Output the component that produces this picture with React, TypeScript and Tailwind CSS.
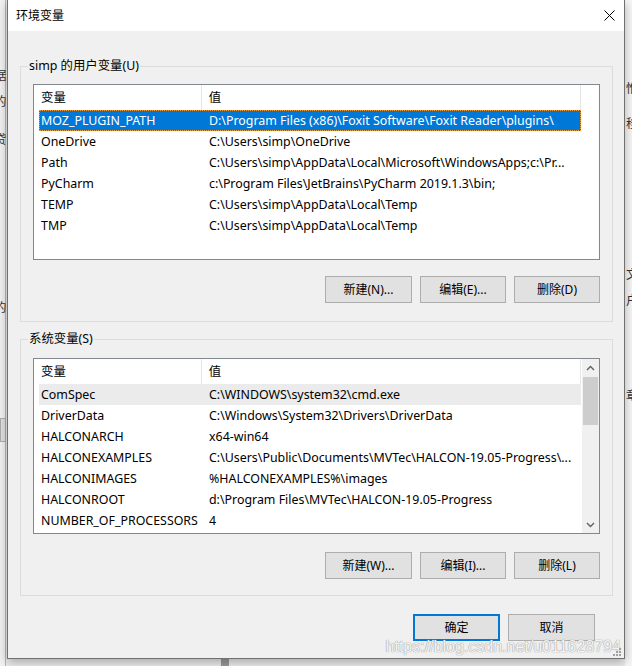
import clsx from 'clsx';

const userVars: [string, string][] = [
    ['MOZ_PLUGIN_PATH', 'D:\\Program Files (x86)\\Foxit Software\\Foxit Reader\\plugins\\'],
    ['OneDrive', 'C:\\Users\\simp\\OneDrive'],
    ['Path', 'C:\\Users\\simp\\AppData\\Local\\Microsoft\\WindowsApps;c:\\Pr...'],
    ['PyCharm', 'c:\\Program Files\\JetBrains\\PyCharm 2019.1.3\\bin;'],
    ['TEMP', 'C:\\Users\\simp\\AppData\\Local\\Temp'],
    ['TMP', 'C:\\Users\\simp\\AppData\\Local\\Temp'],
];

const sysVars: [string, string][] = [
    ['ComSpec', 'C:\\WINDOWS\\system32\\cmd.exe'],
    ['DriverData', 'C:\\Windows\\System32\\Drivers\\DriverData'],
    ['HALCONARCH', 'x64-win64'],
    ['HALCONEXAMPLES', 'C:\\Users\\Public\\Documents\\MVTec\\HALCON-19.05-Progress\\...'],
    ['HALCONIMAGES', '%HALCONEXAMPLES%\\images'],
    ['HALCONROOT', 'd:\\Program Files\\MVTec\\HALCON-19.05-Progress'],
    ['NUMBER_OF_PROCESSORS', '4'],
];

function Row({ name, value, state }: { name: string; value: string; state?: 'selected' | 'inactive' }) {
    return (
        <div
            className={clsx(
                'ml-[5px] flex h-[21px] w-[542px] shrink-0 items-center whitespace-nowrap pt-[1px]',
                state === 'selected' && 'bg-[#0078d7] text-white outline-1 -outline-offset-1 outline-dotted outline-[#f0a040]',
                state === 'inactive' && 'bg-[#ebebeb]'
            )}
        >
            <div className="w-[162px] shrink-0 overflow-hidden pl-[2px]">{name}</div>
            <div className="flex-1 overflow-hidden pl-[8px]">{value}</div>
        </div>
    );
}

function Chevron({ up }: { up?: boolean }) {
    return (
        <svg width="9" height="6" viewBox="0 0 9 6" className={clsx(!up && 'rotate-180')}>
            <path d="M1 5 L4.5 1.5 L8 5" fill="none" stroke="#606060" strokeWidth="1.4" />
        </svg>
    );
}

function VarList({ rows, selected, inactive, scroll }: { rows: [string, string][]; selected?: number; inactive?: number; scroll?: boolean }) {
    return (
        <div className="flex h-[176px] w-[567px] border border-[#828790] bg-white">
            <div className="flex w-[547px] flex-col overflow-hidden">
                <div className="flex h-[25px] shrink-0 items-center">
                    <div className="flex h-full w-[168px] items-center border-r border-[#e5e5e5] pl-[7px] pt-[1px]">变量</div>
                    <div className="flex h-full w-[380px] items-center border-r border-[#e5e5e5] pl-[7px] pt-[1px]">值</div>
                </div>
                {rows.map(([n, v], i) => (
                    <Row key={n} name={n} value={v} state={i === selected ? 'selected' : i === inactive ? 'inactive' : undefined} />
                ))}
            </div>
            {scroll && (
                <div className="ml-auto flex w-[17px] flex-col bg-[#f0f0f0]">
                    <div className="flex h-[17px] items-center justify-center">
                        <Chevron up />
                    </div>
                    <div className="mx-[1px] mt-[1px] h-[48px] bg-[#cdcdcd]" />
                    <div className="mt-auto flex h-[17px] items-center justify-center">
                        <Chevron />
                    </div>
                </div>
            )}
        </div>
    );
}

function Btn({ children, primary, className }: { children: React.ReactNode; primary?: boolean; className?: string }) {
    return (
        <div
            className={clsx(
                'flex h-[27px] items-center justify-center bg-[#e1e1e1] text-[12px]',
                primary ? 'border-2 border-[#0078d7]' : 'border border-[#adadad]',
                className
            )}
        >
            {children}
        </div>
    );
}

function Group({ label, children, className }: { label: string; children: React.ReactNode; className?: string }) {
    return (
        <div className={clsx('relative ml-[12px] flex w-[593px] flex-col border border-[#dcdcdc] pl-[12px]', className)}>
            <span className="absolute -top-[9px] left-[7px] bg-[#f0f0f0] px-[1px] leading-[16px]">{label}</span>
            {children}
        </div>
    );
}

export default function App() {
    return (
        <div className="relative h-[666px] w-[632px] overflow-hidden bg-[#ececec] font-['Noto_Sans','Noto_Sans_CJK_SC',sans-serif] text-[12.4px] text-black">
            {/* desktop behind the dialog */}
            <div className="absolute left-0 top-0 h-full w-[6px] border-r border-[#b9b9b9] bg-[#f3f3f3]" />
            <div className="absolute left-[-6px] top-[67px] text-[#333]">据</div>
            <div className="absolute left-[-6px] top-[93px] text-[#333]">的</div>
            <div className="absolute left-[-6px] top-[131px] text-[#333]">贷</div>
            <div className="absolute left-[-6px] top-[299px] text-[#333]">的</div>
            <div className="absolute left-0 top-[418px] h-[24px] w-[6px] border border-[#adadad] bg-[#e1e1e1]" />
            <div className="absolute left-[33px] top-0 h-[2px] w-[68px] bg-[#6b1a1a]" />
            <div className="absolute right-0 top-0 h-full w-[7px] bg-[#f7f7f7]" />
            <div className="absolute left-[626px] top-[80px] text-[#333]">惟</div>
            <div className="absolute left-[626px] top-[115px] text-[#333]">移</div>
            <div className="absolute left-[626px] top-[266px] text-[#333]">文</div>
            <div className="absolute left-[626px] top-[292px] text-[#333]">户</div>
            <div className="absolute left-[626px] top-[387px] text-[#333]">章</div>
            <div className="absolute left-[221px] top-[655px] h-[11px] w-[8px] bg-[#9a9a9a]" />

            {/* dialog window */}
            <div className="absolute left-[7px] top-0 flex h-[659px] w-[618px] flex-col border-x border-b border-[#707070] bg-[#f0f0f0] shadow-[0_3px_10px_rgba(0,0,0,0.3)]">
                <div className="flex h-[31px] shrink-0 items-center bg-white pl-[8px]">
                    <span className="text-[12px]">环境变量</span>
                    <svg width="11" height="11" viewBox="0 0 11 11" className="ml-auto mr-[9px]">
                        <path d="M0.5 0.5 L10.5 10.5 M10.5 0.5 L0.5 10.5" stroke="#000" strokeWidth="1" />
                    </svg>
                </div>

                <Group label="simp 的用户变量(U)" className="mt-[35px] h-[256px]">
                    <div className="mt-[17px]">
                        <VarList rows={userVars} selected={0} />
                    </div>
                    <div className="mr-[12px] mt-[16px] flex justify-end gap-[8px]">
                        <Btn className="w-[87px]">新建(N)...</Btn>
                        <Btn className="w-[86px]">编辑(E)...</Btn>
                        <Btn className="w-[86px]">删除(D)</Btn>
                    </div>
                </Group>

                <Group label="系统变量(S)" className="mt-[17px] h-[257px]">
                    <div className="mt-[18px]">
                        <VarList rows={sysVars} inactive={0} scroll />
                    </div>
                    <div className="mr-[12px] mt-[18px] flex justify-end gap-[8px]">
                        <Btn className="w-[87px]">新建(W)...</Btn>
                        <Btn className="w-[86px]">编辑(I)...</Btn>
                        <Btn className="w-[86px]">删除(L)</Btn>
                    </div>
                </Group>

                <div className="mr-[29px] mt-[18px] flex justify-end gap-[8px]">
                    <Btn primary className="w-[87px]">确定</Btn>
                    <Btn className="w-[87px]">取消</Btn>
                </div>

                <div className="relative mt-auto flex h-[17px] items-end justify-end pr-[3px]">
                    <span className="absolute bottom-[2px] right-[3px] font-['Liberation_Sans',sans-serif] text-[16px] leading-[18px] text-[#f4f4f4] [text-shadow:0_0_1px_#9a9a9a,0_0_1px_#9a9a9a]">
                        https://blog.csdn.net/u011628794
                    </span>
                    <svg width="8" height="8" viewBox="0 0 8 8" className="relative mb-[2px]">
                        <g fill="#a0a0a0">
                            <rect x="6" y="0" width="2" height="2" />
                            <rect x="3" y="3" width="2" height="2" />
                            <rect x="6" y="3" width="2" height="2" />
                            <rect x="0" y="6" width="2" height="2" />
                            <rect x="3" y="6" width="2" height="2" />
                            <rect x="6" y="6" width="2" height="2" />
                        </g>
                    </svg>
                </div>
            </div>
        </div>
    );
}
